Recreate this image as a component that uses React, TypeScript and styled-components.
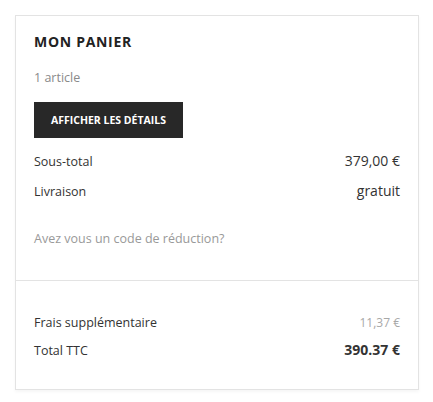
import React from "react";
import styled, { createGlobalStyle } from "styled-components";

const Global = createGlobalStyle`
  html, body { margin: 0; padding: 0; background: #fff; }
  body { font-family: "Open Sans", "Noto Sans", sans-serif; color: #333; }
  * { box-sizing: border-box; }
`;

const Page = styled.div`
  padding: 15px 14px 12px 15px;
`;

const Card = styled.section`
  width: 404px;
  border: 1px solid #e3e3e3;
  box-shadow: 0 2px 3px rgba(0, 0, 0, 0.04);
  background: #fff;
`;

const Top = styled.div`
  padding: 16px 18px 31px 18px;
  display: flex;
  flex-direction: column;
  align-items: flex-start;
`;

const Bottom = styled.div`
  border-top: 1px solid #e3e3e3;
  padding: 31px 18px 27px 18px;
`;

const Title = styled.h2`
  margin: 0;
  font-size: 14px;
  line-height: 20px;
  font-weight: 700;
  letter-spacing: 0.7px;
  color: #222;
`;

const Count = styled.div`
  margin-top: 16px;
  font-size: 12.5px;
  line-height: 20px;
  color: #8a8a8a;
`;

const DetailsButton = styled.button`
  margin-top: 14px;
  width: 149px;
  height: 36px;
  border: 0;
  background: #282828;
  color: #fff;
  font-family: inherit;
  font-size: 10.5px;
  font-weight: 700;
  text-transform: uppercase;
  padding: 0;
  cursor: pointer;
`;

const Rows = styled.div<{ $first?: number; $gap?: number }>`
  align-self: stretch;
  margin-top: ${(p) => p.$first ?? 0}px;
  display: flex;
  flex-direction: column;
  gap: ${(p) => p.$gap ?? 7}px;
`;

const Row = styled.div`
  display: flex;
  justify-content: space-between;
  align-items: baseline;
  line-height: 22px;
`;

const Label = styled.span`
  font-size: 12.5px;
  color: #333;
`;

const Value = styled.span<{ $tone?: "muted" | "strong" }>`
  font-size: ${(p) => (p.$tone === "muted" ? "12px" : "14px")};
  font-weight: ${(p) => (p.$tone === "strong" ? 700 : 400)};
  color: ${(p) => (p.$tone === "muted" ? "#a8a8a8" : "#333")};
`;

const Promo = styled.a`
  margin-top: 26px;
  font-size: 12.5px;
  line-height: 20px;
  color: #999;
  text-decoration: none;
`;

export default function App() {
  return (
    <Page>
      <Global />
      <Card>
        <Top>
          <Title>MON PANIER</Title>
          <Count>1 article</Count>
          <DetailsButton>Afficher les détails</DetailsButton>
          <Rows $first={12}>
            <Row>
              <Label>Sous-total</Label>
              <Value>379,00 €</Value>
            </Row>
            <Row>
              <Label>Livraison</Label>
              <Value>gratuit</Value>
            </Row>
          </Rows>
          <Promo href="#">Avez vous un code de réduction?</Promo>
        </Top>
        <Bottom>
          <Rows $gap={5}>
            <Row>
              <Label>Frais supplémentaire</Label>
              <Value $tone="muted">11,37 €</Value>
            </Row>
            <Row>
              <Label>Total TTC</Label>
              <Value $tone="strong">390.37 €</Value>
            </Row>
          </Rows>
        </Bottom>
      </Card>
    </Page>
  );
}
